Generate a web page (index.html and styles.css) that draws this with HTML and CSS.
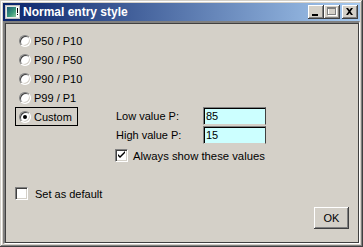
FILE: index.html
```html
<!DOCTYPE html>
<html lang="en">
<head>
    <meta charset="UTF-8">
    <title>Normal entry style</title>
    <link rel="stylesheet" href="styles.css">
</head>
<body>
    <div class="window">
        <div class="titlebar">
            <svg class="app-icon" width="16" height="16" viewBox="0 0 16 16">
                <defs>
                    <linearGradient id="ig" x1="0" y1="0" x2="1" y2="1">
                        <stop offset="0" stop-color="#1c5a78"/>
                        <stop offset="0.6" stop-color="#3c9a7a"/>
                        <stop offset="1" stop-color="#8cc8a0"/>
                    </linearGradient>
                </defs>
                <rect x="0.5" y="1.5" width="14" height="13" fill="#e8e8e8" stroke="#c0c0c0"/>
                <rect x="2" y="3" width="9" height="10" fill="url(#ig)"/>
                <rect x="11" y="3" width="3" height="10" fill="#fff"/>
                <rect x="12" y="4" width="1" height="5" fill="#000"/>
                <rect x="12" y="10" width="1" height="1" fill="#000"/>
            </svg>
            <span class="title">Normal entry style</span>
            <div class="caption-buttons">
                <div class="cap-btn">
                    <svg width="16" height="14" viewBox="0 0 16 14"><rect x="4" y="9" width="6" height="2" fill="#000"/></svg>
                </div>
                <div class="cap-btn">
                    <svg width="16" height="14" viewBox="0 0 16 14">
                        <rect x="4.5" y="3.5" width="8" height="7" fill="none" stroke="#fff"/>
                        <rect x="3.5" y="2.5" width="8" height="7" fill="none" stroke="#808080"/>
                        <rect x="3" y="3" width="9" height="1" fill="#808080"/>
                    </svg>
                </div>
                <div class="cap-btn close-btn">
                    <svg width="16" height="14" viewBox="0 0 16 14">
                        <path d="M4 3h2l1.5 2 1.5-2h2l-2.5 3.5 2.5 3.5h-2l-1.5-2-1.5 2h-2l2.5-3.5z" fill="#000"/>
                    </svg>
                </div>
            </div>
        </div>

        <div class="client">
            <div class="top-area">
                <div class="radio-list">
                    <div class="radio-row"><span class="radio"></span>P50 / P10</div>
                    <div class="radio-row"><span class="radio"></span>P90 / P50</div>
                    <div class="radio-row"><span class="radio"></span>P90 / P10</div>
                    <div class="radio-row"><span class="radio"></span>P99 / P1</div>
                    <div class="radio-row focused"><span class="radio checked"></span>Custom</div>
                </div>

                <div class="custom-group">
                    <div class="field-row">
                        <span class="field-label">Low value P:</span>
                        <span class="field-input">85</span>
                    </div>
                    <div class="field-row">
                        <span class="field-label">High value P:</span>
                        <span class="field-input">15</span>
                    </div>
                    <div class="check-row always">
                        <span class="checkbox">
                            <svg width="9" height="9" viewBox="0 0 9 9"><path d="M1 3l2 2 5-5v2l-5 5-2-2z" fill="#000"/></svg>
                        </span>
                        Always show these values
                    </div>
                </div>
            </div>

            <div class="check-row default-row">
                <span class="checkbox"></span>
                Set as default
            </div>

            <div class="footer">
                <div class="button">OK</div>
            </div>
        </div>
    </div>
</body>
</html>
```

FILE: styles.css
```css
body {
    margin: 0;
    font-family: "Liberation Sans", Arial, sans-serif;
    font-size: 11px;
    color: #000;
    background-color: #d4d0c8;
}
.window {
    width: 363px;
    height: 247px;
    box-sizing: border-box;
    padding: 3px;
    background-color: #d4d0c8;
    box-shadow: inset -1px -1px #404040, inset 1px 1px #d4d0c8,
                inset -2px -2px #808080, inset 2px 2px #fff;
    display: flex;
    flex-direction: column;
}
.titlebar {
    height: 18px;
    display: flex;
    align-items: center;
    padding: 0 2px;
    background: linear-gradient(to right, #0a246a, #a6caf0);
}
.app-icon {
    flex: none;
}
.title {
    margin-left: 2px;
    color: #fff;
    font-weight: bold;
    font-size: 12px;
    flex: 1;
    white-space: nowrap;
}
.caption-buttons {
    display: flex;
}
.cap-btn {
    width: 16px;
    height: 14px;
    background-color: #d4d0c8;
    box-shadow: inset -1px -1px #404040, inset 1px 1px #fff,
                inset -2px -2px #808080, inset 2px 2px #d4d0c8;
}
.cap-btn svg {
    display: block;
}
.close-btn {
    margin-left: 2px;
}
.client {
    flex: 1;
    border-top: 2px solid #808080;
    border-left: 2px solid #808080;
    border-right: 1px solid #fff;
    border-bottom: 1px solid #fff;
    box-shadow: inset 1px 1px #404040, inset -1px -1px #404040;
    padding: 9px 0 0 10px;
    display: flex;
    flex-direction: column;
}
.top-area {
    display: flex;
}
.radio-list {
    width: 101px;
    flex: none;
    display: flex;
    flex-direction: column;
}
.radio-row {
    align-self: flex-start;
    min-width: 63px;
    height: 18.75px;
    box-sizing: border-box;
    border: 1px solid transparent;
    padding-left: 3px;
    display: flex;
    align-items: center;
    white-space: nowrap;
}
.radio-row.focused {
    width: 63px;
    height: 19px;
    border-color: #000;
}
.radio {
    flex: none;
    width: 12px;
    height: 12px;
    margin-right: 3px;
    box-sizing: border-box;
    border-radius: 50%;
    background-color: #fff;
    border: 1px solid;
    border-color: #808080 #fff #fff #808080;
    box-shadow: inset 1px 1px #404040, inset -1px -1px #d4d0c8;
    position: relative;
}
.radio.checked::after {
    content: "";
    position: absolute;
    left: 3px;
    top: 3px;
    width: 4px;
    height: 4px;
    border-radius: 50%;
    background-color: #000;
}
.custom-group {
    padding-top: 75px;
    display: flex;
    flex-direction: column;
}
.field-row {
    display: flex;
    align-items: center;
    height: 18px;
    margin-bottom: 1px;
}
.field-label {
    width: 87px;
}
.field-input {
    width: 63px;
    height: 18px;
    box-sizing: border-box;
    padding-left: 2px;
    line-height: 16px;
    background-color: #ccffff;
    border-top: 1px solid #808080;
    border-left: 1px solid #808080;
    border-right: 1px solid #404040;
    border-bottom: 1px solid #d4d0c8;
    box-shadow: inset 1px 1px #000;
}
.check-row {
    display: flex;
    align-items: center;
    white-space: nowrap;
}
.checkbox {
    flex: none;
    width: 13px;
    height: 13px;
    box-sizing: border-box;
    background-color: #fff;
    border: 1px solid;
    border-color: #808080 #fff #fff #808080;
    box-shadow: inset 1px 1px #404040, inset -1px -1px #d4d0c8;
    display: flex;
    align-items: center;
    justify-content: center;
}
.checkbox svg {
    display: block;
}
.always {
    margin-top: 4px;
    margin-left: -1px;
    gap: 5px;
    font-size: 11.3px;
}
.default-row {
    margin-top: 25px;
    gap: 7px;
}
.footer {
    display: flex;
    justify-content: flex-end;
    margin-top: 7px;
    padding-right: 10px;
}
.button {
    width: 35px;
    height: 22px;
    box-sizing: border-box;
    display: flex;
    align-items: center;
    justify-content: center;
    background-color: #d4d0c8;
    box-shadow: inset -1px -1px #404040, inset 1px 1px #fff,
                inset -2px -2px #808080, inset 2px 2px #d4d0c8;
}
```
